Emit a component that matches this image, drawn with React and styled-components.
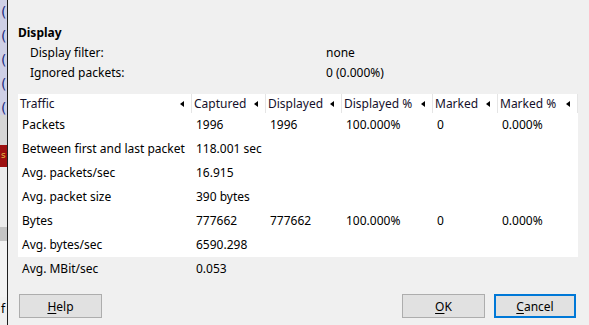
import React from "react";
import styled, { createGlobalStyle } from "styled-components";

const GlobalStyle = createGlobalStyle`
  html, body {
    margin: 0;
    padding: 0;
    background: #f0f0f0;
  }
  body {
    font-family: "Noto Sans", "Open Sans", sans-serif;
    font-size: 12px;
    color: #000;
  }
`;

const Screen = styled.div`
  display: flex;
  width: 589px;
  height: 325px;
  overflow: hidden;
`;

const BackWindow = styled.div`
  width: 7px;
  display: flex;
  flex-direction: column;
  border-right: 1px solid #1e1e1e;
  overflow: hidden;
`;

const BackSegment = styled.div`
  height: ${(p) => p.$h}px;
  background: ${(p) => p.$bg};
  color: ${(p) => p.$fg || "#1a2a80"};
  font-family: "DejaVu Sans", sans-serif;
  font-size: ${(p) => p.$size || 14}px;
  line-height: ${(p) => p.$lh || 24}px;
  padding-left: 1px;
  white-space: pre;
  overflow: hidden;
`;

const Dialog = styled.div`
  flex: 1;
  display: flex;
  flex-direction: column;
  padding: 23px 11px 0 10px;
  background: #f0f0f0;
`;

const SectionTitle = styled.div`
  font-weight: 700;
  line-height: 20px;
`;

const InfoGrid = styled.div`
  display: grid;
  grid-template-columns: 296px 1fr;
  padding-left: 12px;
  line-height: 20px;
`;

const Table = styled.div`
  margin-top: 11px;
  display: flex;
  flex-direction: column;
`;

const cols = "174px 74px 76px 91px 65px 80px";

const HeaderRow = styled.div`
  display: grid;
  grid-template-columns: ${cols};
  height: 19px;
  background: #fff;
`;

const HeaderCell = styled.div`
  display: flex;
  align-items: center;
  justify-content: space-between;
  padding: 0 7px 0 2px;
  border-right: 1px solid #e5e5e5;
  line-height: 19px;
  color: #14102a;
`;

const SortArrow = styled.span`
  width: 0;
  height: 0;
  border-top: 3.5px solid transparent;
  border-bottom: 3.5px solid transparent;
  border-right: 4px solid #000;
`;

const Row = styled.div`
  display: grid;
  grid-template-columns: ${cols};
  height: 24px;
  background: ${(p) => (p.$outside ? "transparent" : "#fff")};
`;

const Cell = styled.div`
  padding-left: 4px;
  line-height: 24px;
  white-space: nowrap;
`;

const Footer = styled.div`
  margin-top: 13px;
  display: flex;
  align-items: center;
  gap: 9px;
  padding: 0 2px 0 1px;
`;

const Spacer = styled.div`
  flex: 1;
`;

const Button = styled.button`
  width: ${(p) => p.$w || 83}px;
  height: 24px;
  background: #e1e1e1;
  border: ${(p) => (p.$default ? "2px solid #0078d7" : "1px solid #adadad")};
  font-family: inherit;
  font-size: 12px;
  color: #000;
  padding: 0;
  u {
    text-underline-offset: 2px;
  }
`;

const headers = ["Traffic", "Captured", "Displayed", "Displayed %", "Marked", "Marked %"];

const rows = [
  ["Packets", "1996", "1996", "100.000%", "0", "0.000%"],
  ["Between first and last packet", "118.001 sec", "", "", "", ""],
  ["Avg. packets/sec", "16.915", "", "", "", ""],
  ["Avg. packet size", "390 bytes", "", "", "", ""],
  ["Bytes", "777662", "777662", "100.000%", "0", "0.000%"],
  ["Avg. bytes/sec", "6590.298", "", "", "", ""],
  ["Avg. MBit/sec", "0.053", "", "", "", ""],
];

const backSegments = [
  { h: 115, bg: "#cfd0e6", text: "(\n(\n(\n(\n(" },
  { h: 30, bg: "#d6d6d6", text: "" },
  { h: 22, bg: "#9c1010", fg: "#e8c040", text: "s", size: 9, lh: 20 },
  { h: 60, bg: "#ececec", text: "" },
  { h: 14, bg: "#c4c4c4", text: "" },
  { h: 56, bg: "#f2f2f2", text: "" },
  { h: 28, bg: "#f0f0f0", fg: "#000", text: "f", size: 12 },
];

export default function App() {
  return (
    <>
      <GlobalStyle />
      <Screen>
        <BackWindow>
          {backSegments.map((s, i) => (
            <BackSegment key={i} $h={s.h} $bg={s.bg} $fg={s.fg} $size={s.size} $lh={s.lh}>
              {s.text}
            </BackSegment>
          ))}
        </BackWindow>
        <Dialog>
          <SectionTitle>Display</SectionTitle>
          <InfoGrid>
            <span>Display filter:</span>
            <span>none</span>
            <span>Ignored packets:</span>
            <span>0 (0.000%)</span>
          </InfoGrid>
          <Table>
            <HeaderRow>
              {headers.map((h) => (
                <HeaderCell key={h}>
                  <span>{h}</span>
                  <SortArrow />
                </HeaderCell>
              ))}
            </HeaderRow>
            {rows.map((r, i) => (
              <Row key={r[0]} $outside={i === rows.length - 1}>
                {r.map((c, j) => (
                  <Cell key={j}>{c}</Cell>
                ))}
              </Row>
            ))}
          </Table>
          <Footer>
            <Button>
              <u>H</u>elp
            </Button>
            <Spacer />
            <Button>
              <u>O</u>K
            </Button>
            <Button $default $w={82}>
              <u>C</u>ancel
            </Button>
          </Footer>
        </Dialog>
      </Screen>
    </>
  );
}
